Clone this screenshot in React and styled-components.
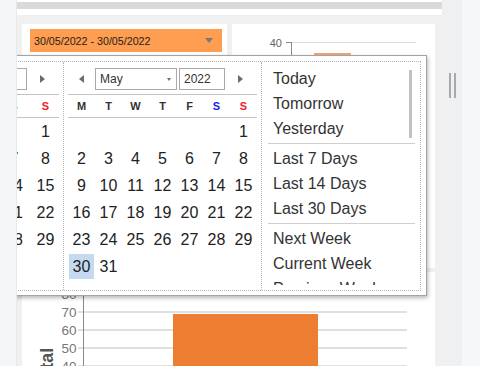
import React from 'react';
import styled, { createGlobalStyle } from 'styled-components';

const GlobalStyle = createGlobalStyle`
  html, body {
    margin: 0;
    padding: 0;
    background: #fff;
  }
  body {
    font-family: "Liberation Sans", Arial, sans-serif;
  }
`;

const Page = styled.div`
  display: flex;
  width: 480px;
  height: 366px;
  overflow: hidden;
`;

const LeftStrip = styled.div`
  flex: none;
  width: 16px;
  background: #f4f5f6;
  border-right: 1px solid #e8e9ea;
`;

const Main = styled.div`
  position: relative;
  flex: none;
  width: 425px;
  overflow: hidden;
  background: #fff;
`;

const TabBand = styled.div`
  height: 7px;
  margin-top: 2px;
  background: #dadada;
`;

const Panel = styled.div`
  display: grid;
  grid-template-columns: 205px 203px;
  grid-template-rows: 244px 120px;
  column-gap: 5px;
  row-gap: 4px;
  margin-top: 6px;
  padding: 9px 7px 0 5px;
  background: #f0f0f0;
`;

const Card = styled.div`
  background: #fff;
  overflow: hidden;
  grid-column: ${p => (p.$wide ? '1 / span 2' : 'auto')};
`;

const DateDropdown = styled.div`
  display: flex;
  align-items: center;
  justify-content: space-between;
  width: 192px;
  height: 23px;
  margin: 5px 0 0 8px;
  padding: 0 9px 0 4px;
  box-sizing: border-box;
  background: #ff9d50;
  color: #1e1e1e;
  font-size: 10.7px;
`;

const Caret = styled.span`
  width: 0;
  height: 0;
  border-left: ${p => p.$w / 2}px solid transparent;
  border-right: ${p => p.$w / 2}px solid transparent;
  border-top: ${p => p.$h}px solid ${p => p.$color};
`;

const Popup = styled.div`
  position: absolute;
  left: -158px;
  top: 55px;
  padding: 5px 5px 4px;
  background: #fff;
  border: 1px solid #a3a3a3;
  box-shadow: 1px 2px 4px rgba(0, 0, 0, 0.28);
`;

const PopupInner = styled.div`
  display: flex;
  height: 228px;
  border: 1px dotted #b4b4b4;
`;

const CalendarPane = styled.div`
  flex: none;
  width: 189px;
  min-width: 0;
  padding: 0 4px;
  border-left: ${p => (p.$first ? 'none' : '1px dotted #b4b4b4')};
`;

const NavRow = styled.div`
  display: flex;
  align-items: center;
  height: 22px;
  padding: 6px 0 4px;
  border-bottom: 1px solid #c4c4c4;
`;

const NavArrow = styled.div`
  display: flex;
  justify-content: center;
  width: ${p => p.$w}px;
  &::before {
    content: '';
    border-top: 4px solid transparent;
    border-bottom: 4px solid transparent;
    ${p => (p.$next ? 'border-left' : 'border-right')}: 5px solid #6b6b6b;
  }
`;

const SelectBox = styled.div`
  display: flex;
  align-items: center;
  justify-content: space-between;
  width: ${p => p.$w}px;
  height: 22px;
  margin-right: ${p => p.$mr || 0}px;
  padding: 0 5px 0 4px;
  box-sizing: border-box;
  border: 1px solid #a9a9a9;
  color: #333;
  font-size: 12px;
`;

const WeekHeader = styled.div`
  display: grid;
  grid-template-columns: ${p => p.$cols};
  margin-left: ${p => p.$shift}px;
  height: 22px;
  align-items: center;
  border-bottom: 1px solid #c4c4c4;
  font-size: 11px;
  font-weight: bold;
  text-align: center;
`;

const WeekDay = styled.span`
  color: ${p => p.$color || '#333'};
`;

const DayGrid = styled.div`
  display: grid;
  grid-template-columns: ${p => p.$cols};
  grid-auto-rows: 27px;
  margin-left: ${p => p.$shift}px;
`;

const DayCell = styled.div`
  display: flex;
  align-items: center;
  justify-content: center;
  border: 1px solid transparent;
  background-clip: padding-box;
  background-color: ${p => (p.$selected ? '#c5d9f1' : 'transparent')};
  color: #222;
  font-size: 16px;
`;

const PresetPane = styled.div`
  flex: none;
  width: 159px;
  padding: 4px 5px 0 6px;
  box-sizing: border-box;
  border-left: 1px dotted #b4b4b4;
`;

const PresetList = styled.div`
  position: relative;
  height: 219px;
  overflow: hidden;
`;

const PresetItem = styled.div`
  height: 25px;
  line-height: 25px;
  padding-left: 5px;
  color: #333;
  font-size: 16px;
  white-space: nowrap;
`;

const PresetDivider = styled.div`
  height: 1px;
  margin: 2px 0;
  background: #cfcfcf;
`;

const ScrollThumb = styled.div`
  position: absolute;
  top: 4px;
  right: 3px;
  width: 3px;
  height: 68px;
  background: #c1c1c1;
`;

const Splitter = styled.div`
  display: flex;
  flex: none;
  justify-content: center;
  align-items: flex-start;
  gap: 3px;
  width: 20px;
  padding-top: 73px;
  box-sizing: border-box;
  background: #eef0f2;
`;

const GripBar = styled.span`
  width: 2px;
  height: 25px;
  background: #a9a9a9;
`;

const SideEdge = styled.div`
  flex: 1;
  background: #f6f7f8;
`;

const ChartSvg = styled.svg`
  display: block;
  font-family: "Liberation Sans", Arial, sans-serif;
`;

const WEEK = [
  { d: 'M' },
  { d: 'T' },
  { d: 'W' },
  { d: 'T' },
  { d: 'F' },
  { d: 'S', color: '#2222ee' },
  { d: 'S', color: '#f22222' },
];

const MAY_OFFSET = 6;
const MAY_DAYS = 31;

const PRESETS = [
  ['Today', 'Tomorrow', 'Yesterday'],
  ['Last 7 Days', 'Last 14 Days', 'Last 30 Days'],
  ['Next Week', 'Current Week', 'Previous Week', 'Next Month'],
];

// the first (scrolled-off) month lays its weekend columns a little wider
const EVEN_COLS = 'repeat(7, 27px)';
const FIRST_COLS = 'repeat(5, 27px) 31px 32px';

const Calendar = ({ first, selected }) => {
  const cols = first ? FIRST_COLS : EVEN_COLS;
  const shift = first ? -6.5 : 0;
  const cells = [];
  for (let i = 0; i < MAY_OFFSET; i++) cells.push(<DayCell key={'e' + i} />);
  for (let d = 1; d <= MAY_DAYS; d++) {
    cells.push(
      <DayCell key={d} $selected={d === selected}>
        {d}
      </DayCell>
    );
  }
  return (
    <CalendarPane $first={first}>
      <NavRow>
        <NavArrow $w={27} />
        <SelectBox $w={82} $mr={2}>
          May
          <Caret $w={5} $h={3} $color="#6e6e6e" />
        </SelectBox>
        <SelectBox $w={46}>2022</SelectBox>
        <NavArrow $w={30} $next />
      </NavRow>
      <WeekHeader $cols={cols} $shift={shift}>
        {WEEK.map((w, i) => (
          <WeekDay key={i} $color={w.color}>
            {w.d}
          </WeekDay>
        ))}
      </WeekHeader>
      <DayGrid $cols={cols} $shift={shift}>{cells}</DayGrid>
    </CalendarPane>
  );
};

const TopChart = () => (
  <ChartSvg width="203" height="244">
    <line x1="59" y1="18.5" x2="184" y2="18.5" stroke="#dcdcdc" />
    <rect x="82" y="29" width="37" height="215" fill="#f0a675" />
    <line x1="54" y1="18.5" x2="59" y2="18.5" stroke="#888" />
    <line x1="59.5" y1="18" x2="59.5" y2="244" stroke="#888" />
    <text x="50" y="23" fontSize="11" fill="#666" textAnchor="end">40</text>
  </ChartSvg>
);

const TICKS = [
  { v: '80', y: 22 },
  { v: '70', y: 40 },
  { v: '60', y: 58 },
  { v: '50', y: 76 },
  { v: '40', y: 94 },
];

const BottomChart = () => (
  <ChartSvg width="413" height="120">
    {TICKS.map(t => (
      <g key={t.v}>
        <line x1="56" y1={t.y} x2="385" y2={t.y} stroke="#e0e0e0" strokeWidth="2" />
        <text x="54.5" y={t.y + 4.5} fontSize="13.5" fill="#777" textAnchor="end">
          {t.v}
        </text>
      </g>
    ))}
    <rect x="151" y="42" width="145" height="80" fill="#ed7d31" />
    <line x1="61.5" y1="0" x2="61.5" y2="120" stroke="#888" />
    <text
      transform="translate(31 96.5) rotate(-90)"
      fontSize="18"
      fontWeight="bold"
      fill="#555"
      textAnchor="middle"
    >
      Total
    </text>
  </ChartSvg>
);

export default function App() {
  return (
    <Page>
      <GlobalStyle />
      <LeftStrip />
      <Main>
        <TabBand />
        <Panel>
          <Card>
            <DateDropdown>
              30/05/2022 - 30/05/2022
              <Caret $w={9} $h={5} $color="#7a7a7a" />
            </DateDropdown>
          </Card>
          <Card>
            <TopChart />
          </Card>
          <Card $wide>
            <BottomChart />
          </Card>
        </Panel>
        <Popup>
          <PopupInner>
            <Calendar first />
            <Calendar selected={30} />
            <PresetPane>
              <PresetList>
                {PRESETS.map((group, gi) => (
                  <React.Fragment key={gi}>
                    {gi > 0 && <PresetDivider />}
                    {group.map(p => (
                      <PresetItem key={p}>{p}</PresetItem>
                    ))}
                  </React.Fragment>
                ))}
                <ScrollThumb />
              </PresetList>
            </PresetPane>
          </PopupInner>
        </Popup>
      </Main>
      <Splitter>
        <GripBar />
        <GripBar />
      </Splitter>
      <SideEdge />
    </Page>
  );
}
